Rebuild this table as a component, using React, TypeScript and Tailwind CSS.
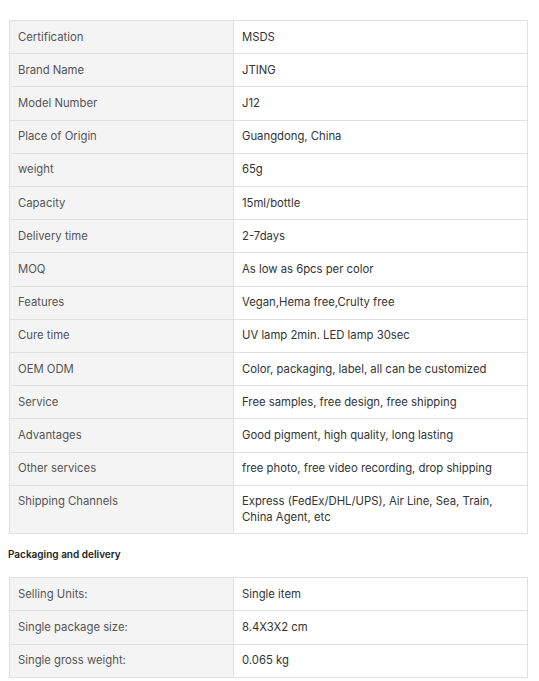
import React from 'react';

const attributes: [string, string][] = [
  ['Certification', 'MSDS'],
  ['Brand Name', 'JTING'],
  ['Model Number', 'J12'],
  ['Place of Origin', 'Guangdong, China'],
  ['weight', '65g'],
  ['Capacity', '15ml/bottle'],
  ['Delivery time', '2-7days'],
  ['MOQ', 'As low as 6pcs per color'],
  ['Features', 'Vegan,Hema free,Crulty free'],
  ['Cure time', 'UV lamp 2min. LED lamp 30sec'],
  ['OEM ODM', 'Color, packaging, label, all can be customized'],
  ['Service', 'Free samples, free design, free shipping'],
  ['Advantages', 'Good pigment, high quality, long lasting'],
  ['Other services', 'free photo, free video recording, drop shipping'],
  ['Shipping Channels', 'Express (FedEx/DHL/UPS), Air Line, Sea, Train, China Agent, etc'],
];

const packaging: [string, string][] = [
  ['Selling Units:', 'Single item'],
  ['Single package size:', '8.4X3X2 cm'],
  ['Single gross weight:', '0.065 kg'],
];

const AttrTable: React.FC<{ rows: [string, string][] }> = ({ rows }) => (
  <table className="w-[519px] border-collapse text-[11.3px] leading-[15.2px]">
    <tbody>
      {rows.map(([label, value], i) => (
        <tr key={i}>
          <td className="w-[224px] border border-[#e0e0e0] bg-[#f4f4f4] px-[8px] py-[8.5px] align-top text-[#555]">
            {label}
          </td>
          <td className="border border-[#e0e0e0] bg-white px-[8px] py-[8.5px] pr-[30px] align-top text-[#333]">
            {value}
          </td>
        </tr>
      ))}
    </tbody>
  </table>
);

export default function App() {
  return (
    <div className="min-h-screen bg-white pl-[9px] font-['Inter',sans-serif]">
      <h3 className="ml-[-1px] mt-[-11px] mb-[17px] text-[10px] font-semibold leading-[14px] text-[#222]">
        Other attributes
      </h3>
      <AttrTable rows={attributes} />
      <h3 className="ml-[-1px] mt-[13px] mb-[16px] text-[10px] font-semibold leading-[14px] text-[#222]">
        Packaging and delivery
      </h3>
      <AttrTable rows={packaging} />
    </div>
  );
}
